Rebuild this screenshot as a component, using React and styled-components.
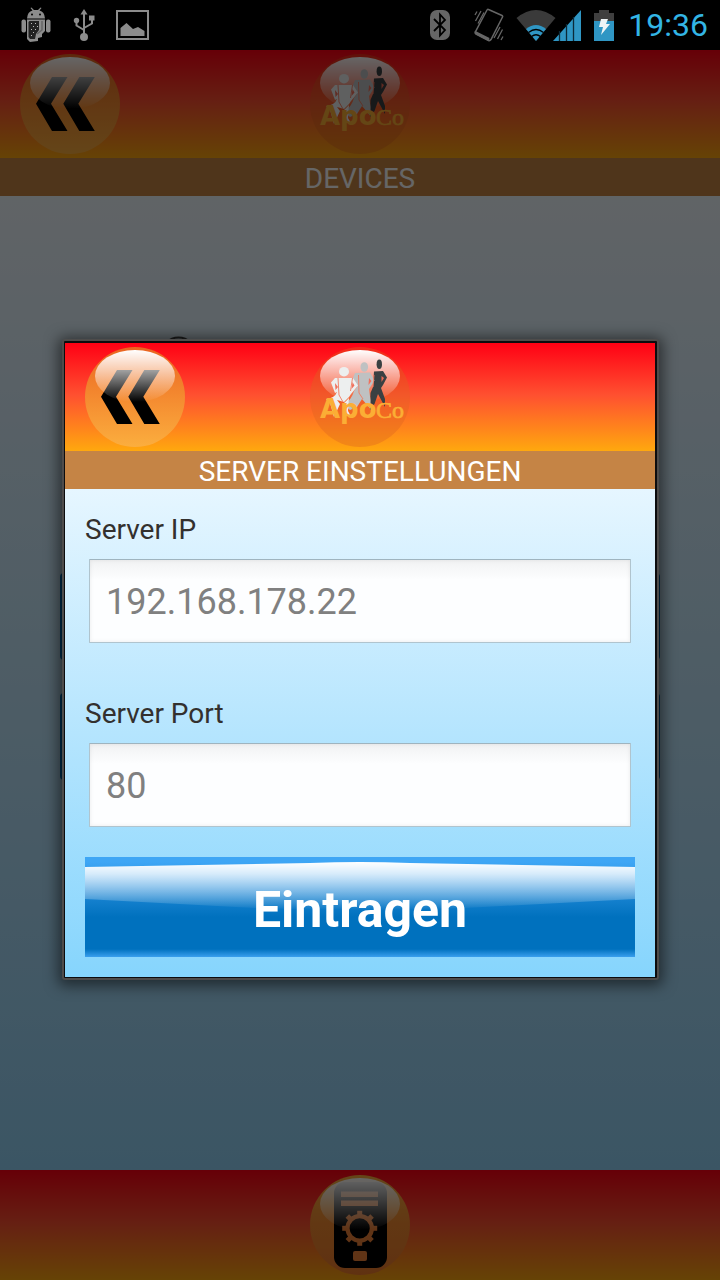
import React from "react";
import styled, { createGlobalStyle } from "styled-components";

const GlobalStyle = createGlobalStyle`
  * { box-sizing: border-box; }
  body { margin: 0; background: #000; font-family: Roboto, "Liberation Sans", sans-serif; }
`;

const Screen = styled.div`
  display: flex;
  flex-direction: column;
  min-height: 100vh;
`;

const StatusBar = styled.div`
  display: flex;
  justify-content: space-between;
  height: 50px;
  padding: 0 12px 0 20px;
  background: #000;
`;

const StatusGroup = styled.div`
  display: flex;
  align-items: center;
  gap: ${(p) => p.$gap}px;
`;

const StatusIcon = styled.svg`
  display: block;
  flex: none;
`;

const Clock = styled.time`
  margin-left: 2px;
  color: #33b5e5;
  font-size: 32px;
  line-height: 50px;
`;

const Stage = styled.div`
  position: relative;
  display: flex;
  flex: 1;
  flex-direction: column;
`;

const Page = styled.div`
  display: flex;
  flex: 1;
  flex-direction: column;
`;

const barGradient = "linear-gradient(#ff0014, #ff5030 48%, #ffa80e)";

const Header = styled.header`
  display: grid;
  grid-template-columns: 100px 1fr 100px;
  justify-items: center;
  height: 108px;
  padding: 4px 20px;
  background: ${barGradient};
`;

const Title = styled.h1`
  height: 38px;
  margin: 0;
  padding-top: 2px;
  background: #c58445;
  color: #fff;
  font-size: 28px;
  font-weight: 400;
  line-height: 38px;
  text-align: center;
`;

const PageBody = styled.main`
  display: flex;
  flex: 1;
  flex-direction: column;
  padding: 140px 60px;
  background: linear-gradient(#f1f9ff, #c6e9fd 45%, #94d5fb);
`;

const Emblem = styled.svg`
  display: block;
  margin: 0 0 200px 100px;
`;

const Panel = styled.div`
  height: 87px;
  margin-bottom: 33px;
  border-radius: 4px;
  background: #0071be;
`;

const Footer = styled.footer`
  display: flex;
  justify-content: center;
  height: 110px;
  padding: 5px 20px;
  background: ${barGradient};
`;

const RoundButton = styled.button`
  width: 100px;
  height: 100px;
  padding: 0;
  border: 0;
  border-radius: 50%;
  background: none;
  cursor: pointer;

  svg { display: block; }
`;

const Scrim = styled.div`
  position: absolute;
  inset: 0;
  display: flex;
  align-items: center;
  padding: 0 61px 11px 62px;
  background: rgba(0, 0, 0, 0.6);
`;

const Dialog = styled.section`
  flex: 1;
  padding: 2px 2px 1px 1px;
  border: 2px solid #4e4c4b;
  border-radius: 3px;
  background: #0c0c0e;
  box-shadow: 0 2px 14px 4px rgba(0, 0, 0, 0.5);
`;

const Form = styled.form`
  display: flex;
  flex-direction: column;
  padding: 20px;
  background: linear-gradient(#e6f6ff, #b5e5fe 50%, #86d5fd);
`;

const Label = styled.label`
  margin-bottom: 8px;
  color: #33302e;
  font-size: 28px;
  line-height: 42px;
`;

const Field = styled.input`
  height: 84px;
  margin: 0 4px ${(p) => p.$after}px;
  padding: 2px 16px 0;
  border: 1px solid #b0c4ce;
  border-top-color: #9fb4bf;
  border-radius: 1px;
  background: linear-gradient(#f1f2f3, #fdfeff 20px);
  box-shadow: inset 0 0 4px rgba(0, 0, 0, 0.08);
  color: #808080;
  font: 400 36px Roboto, "Liberation Sans", sans-serif;
  outline: none;
`;

const SubmitButton = styled.button`
  position: relative;
  height: 100px;
  padding: 0;
  border: 0;
  background: linear-gradient(#3ea6f5, #3ea6f5 5px, #1c86d4 36px, #0071be 60px, #0071be 92px, #3a9fee 100px);
  color: #fff;
  font: 700 50px Roboto, "Liberation Sans", sans-serif;
  cursor: pointer;
`;

const ButtonGloss = styled.svg`
  position: absolute;
  inset: 0;
  width: 100%;
  height: 100%;
`;

const ButtonText = styled.span`
  position: relative;
  display: block;
  padding-top: 6px;
  line-height: 60px;
`;

function Gloss({ id }) {
  return (
    <>
      <defs>
        <linearGradient id={id} x1="0" y1="0" x2="0" y2="1">
          <stop offset="0" stopColor="#fff" />
          <stop offset="0.4" stopColor="#fff" stopOpacity="0.62" />
          <stop offset="1" stopColor="#fff" stopOpacity="0" />
        </linearGradient>
      </defs>
      <ellipse cx="50" cy="29" rx="40" ry="26" fill={`url(#${id})`} />
    </>
  );
}

function Disc({ id, from = "#ea6420", to = "#fbae3e" }) {
  return (
    <>
      <defs>
        <linearGradient id={id} x1="0" y1="0" x2="0" y2="1">
          <stop offset="0" stopColor={from} />
          <stop offset="0.5" stopColor="#f48a30" />
          <stop offset="1" stopColor={to} />
        </linearGradient>
      </defs>
      <circle cx="50" cy="50" r="50" fill={`url(#${id})`} />
    </>
  );
}

function BackIcon({ id }) {
  return (
    <svg width="100" height="100" viewBox="0 0 100 100" aria-hidden="true">
      <Disc id={`${id}-disc`} />
      <path d="M32 23H47.500L31 49.700L47.500 77H32L16 49.700ZM59.300 23H74.800L58.300 49.700L74.800 77H59.300L43.300 49.700Z" />
      <Gloss id={`${id}-gloss`} />
    </svg>
  );
}

function Logo({ id }) {
  return (
    <svg width="100" height="100" viewBox="0 0 100 100" role="img" aria-label="ApoCo">
      <circle cx="50" cy="50" r="50" fill="#dc6420" fillOpacity="0.38" />
      <Gloss id={`${id}-gloss`} />
      <g fill="#3a4042">
        <ellipse cx="69.300" cy="17.300" rx="2.700" ry="4.700" />
        <path d="M64 24.500L73 24L77 30.500L73 38L71 41L75 52V60L68 47L64.500 57L60 63L60.500 46L63 40Z" />
      </g>
      <path d="M71.500 29L74 31L71.500 35Z" fill="#ee6a55" />
      <g fill="#bfc1c2">
        <ellipse cx="54.300" cy="20" rx="3.800" ry="4.800" />
        <path d="M45 26L60 25.500L64.500 33.500L59 42L60.500 53V62L52 52L47 60L40 63L34 58Q42 52 44 44L47 40L44 34L42 38L41 36Z" />
      </g>
      <path d="M59 31L61.500 34L58.500 38Z" fill="#f0705c" />
      <g fill="#edefef">
        <ellipse cx="34" cy="24.700" rx="5" ry="4.800" />
        <path d="M25 31H43L48 38.500L41 47L39 50L34 55L27 53L30 57L24 70L20 56L16 52Q25 51 27 45L25 46L21 35.500Z" />
        <path d="M33 57L39 51L38 64L42 71L34 67Z" />
      </g>
      <path d="M25 36L28 40L25.500 43ZM42.500 35L44.500 38.500L41.500 42Z" fill="#f0705c" />
      <path d="M28 31L29 48L33 55M42.500 31L40.500 44M48.500 28L49 46L53 52M64 28L63 40" stroke="#f07a60" strokeWidth="0.900" fill="none" />
      <text x="10" y="71" fill="#fbae35" fontFamily="DejaVu Sans, sans-serif" fontWeight="700" fontSize="26">
        Apo
        <tspan x="66" fontFamily="Liberation Serif, serif" fontWeight="400" fontSize="24" stroke="#fbae35" strokeWidth="0.700">
          Co
        </tspan>
      </text>
    </svg>
  );
}

function DeviceIcon() {
  return (
    <svg width="100" height="100" viewBox="0 0 100 100" aria-hidden="true">
      <Disc id="device-disc" from="#fbae3e" to="#f07c2c" />
      <rect x="24" y="7" width="53" height="86" rx="11" />
      <g fill="#f08238">
        <rect x="31" y="16.500" width="37" height="5.500" />
        <rect x="31" y="25.500" width="37" height="5.500" />
        <rect x="43" y="76" width="14" height="10" rx="2" />
        {[0, 45, 90, 135, 180, 225, 270, 315].map((a) => (
          <rect key={a} x="47.200" y="35.800" width="5" height="6" transform={`rotate(${a} 49.700 53.300)`} />
        ))}
      </g>
      <circle cx="49.700" cy="53.300" r="12.200" fill="none" stroke="#f08238" strokeWidth="4.200" />
      <Gloss id="device-gloss" />
    </svg>
  );
}

function AppHeader({ id, title }) {
  return (
    <>
      <Header>
        <RoundButton type="button" aria-label="Zurück">
          <BackIcon id={`${id}-back`} />
        </RoundButton>
        <Logo id={`${id}-logo`} />
      </Header>
      <Title>{title}</Title>
    </>
  );
}

function DebugIcon() {
  return (
    <StatusIcon width="32" height="36" viewBox="0 0 32 36" aria-hidden="true">
      <g fill="#8c8c8c">
        <path d="M7 11.500Q7.500 4.500 12.500 3.500L10.500 1L11.500 0.500L14 3H18L20.500 0.500L21.500 1L19.500 3.500Q24.500 4.500 25 11.500Z" />
        <rect x="1.500" y="12.500" width="4.500" height="13" rx="2" />
        <rect x="26" y="12.500" width="4.500" height="13" rx="2" />
        <path d="M7 12.500H25V24L22 27V30L18 31V34L10 35L7 32Z" />
      </g>
      <path d="M9.500 14H19V23L16 27L15 32H10L8.500 30V15Z" fill="#222" />
      <path d="M22 14V23L17 27" fill="none" stroke="#666" strokeWidth="1.500" />
      <path d="M11 16h1v1h-1zM15 16h1v1h-1zM13 19h1v1h-1zM17 19h1v1h-1zM11 22h1v1h-1zM15 22h1v1h-1zM13 25h1v1h-1zM11 28h1v1h-1z" fill="#bbb" />
      <circle cx="12" cy="7.500" r="1" />
      <circle cx="20" cy="7.500" r="1" />
    </StatusIcon>
  );
}

function UsbIcon() {
  return (
    <StatusIcon width="22" height="34" viewBox="0 0 22 34" aria-hidden="true">
      <g fill="#8c8c8c">
        <circle cx="11" cy="29" r="4" />
        <path d="M11 1L14.500 6.500H7.500Z" />
        <circle cx="3.500" cy="12.500" r="2.700" />
        <rect x="16" y="7.500" width="5.500" height="5" />
      </g>
      <path d="M11 5V29M3.500 13V17.500L11 22M19 12V15.500L11 20" fill="none" stroke="#8c8c8c" strokeWidth="2" />
    </StatusIcon>
  );
}

function PictureIcon() {
  return (
    <StatusIcon width="33" height="30" viewBox="0 0 33 30" aria-hidden="true">
      <rect x="1" y="1" width="31" height="28" fill="none" stroke="#8c8c8c" strokeWidth="2" />
      <path d="M4.500 26V18L10.500 13L17 19L22 17L28.500 21V26Z" fill="#8c8c8c" />
    </StatusIcon>
  );
}

function BluetoothIcon() {
  return (
    <StatusIcon width="20" height="30" viewBox="0 0 20 30" aria-hidden="true">
      <rect width="20" height="30" rx="7" fill="#666" />
      <path d="M4 9L15 20L10 25.500V4.500L15 10L4 21" fill="none" stroke="#000" strokeWidth="1.800" />
    </StatusIcon>
  );
}

function VibrateIcon() {
  return (
    <StatusIcon width="30" height="34" viewBox="0 0 30 34" aria-hidden="true">
      <path d="M14.500 1.500L28 7.500Q29 8 28.500 9L17 31.500Q16 33 14.500 32.500L2 26Q0.500 25 1.500 23.500L13 2Q13.500 1 14.500 1.500Z" fill="none" stroke="#666" strokeWidth="1.500" />
      <path d="M1.500 23L15.500 30L14.500 33L1 26Z" fill="#666" />
      <path d="M1 7L3 3.500M1.500 13L7 3M4 15.500L10 4.500M20 30L26 19M23.500 31L28.500 21.500M27 32L29 28.500" fill="none" stroke="#666" strokeWidth="1.300" />
    </StatusIcon>
  );
}

function SignalIcon() {
  return (
    <StatusIcon width="66" height="33" viewBox="0 0 66 33" aria-hidden="true">
      <path d="M0.500 9Q20 -7 39.500 9L20 32Z" fill="#3a3a3a" />
      <path d="M10 20Q20 12 30 20L20 32Z" fill="#2f96c4" />
      <path d="M12.500 23.500Q20 17.500 27.500 23.500M15.500 27.500Q20 24 24.500 27.500" fill="none" stroke="#000" strokeWidth="1.300" />
      <path d="M37 32L65 1V32Z" fill="#2f96c4" />
      <path d="M43.500 22V32M50.500 15V32M57.500 8V32" stroke="#0c2a38" strokeWidth="1.300" />
    </StatusIcon>
  );
}

function BatteryIcon() {
  return (
    <StatusIcon width="20" height="31" viewBox="0 0 20 31" aria-hidden="true">
      <path d="M0 3H5V0H15V3H20V31H0Z" fill="#3f3f3f" />
      <rect y="11" width="20" height="20" fill="#2f96c4" />
      <path d="M7 9H14L12 14H16L7 25L9 17H5Z" fill="#eef4f6" />
    </StatusIcon>
  );
}

export default function App() {
  return (
    <Screen>
      <GlobalStyle />
      <StatusBar>
        <StatusGroup $gap={21}>
          <DebugIcon />
          <UsbIcon />
          <PictureIcon />
        </StatusGroup>
        <StatusGroup $gap={12}>
          <BluetoothIcon />
          <span />
          <VibrateIcon />
          <SignalIcon />
          <BatteryIcon />
          <Clock>19:36</Clock>
        </StatusGroup>
      </StatusBar>

      <Stage>
        <Page inert>
          <AppHeader id="page" title="DEVICES" />
          <PageBody>
            <Emblem width="37" height="37" viewBox="0 0 37 37" aria-hidden="true">
              <circle cx="18.500" cy="18.500" r="17" fill="none" stroke="#444" strokeWidth="2" />
            </Emblem>
            <Panel />
            <Panel />
          </PageBody>
          <Footer>
            <RoundButton type="button" aria-label="Server">
              <DeviceIcon />
            </RoundButton>
          </Footer>
        </Page>

        <Scrim>
          <Dialog role="dialog" aria-label="Server Einstellungen">
            <AppHeader id="dialog" title="SERVER EINSTELLUNGEN" />
            <Form onSubmit={(e) => e.preventDefault()}>
              <Label htmlFor="server-ip">Server IP</Label>
              <Field id="server-ip" type="text" defaultValue="192.168.178.22" $after={50} />
              <Label htmlFor="server-port">Server Port</Label>
              <Field id="server-port" type="text" defaultValue="80" $after={30} />
              <SubmitButton type="submit">
                <ButtonGloss viewBox="0 0 550 100" preserveAspectRatio="none" aria-hidden="true">
                  <defs>
                    <linearGradient id="submit-gloss" x1="0" y1="0" x2="0" y2="1">
                      <stop offset="0" stopColor="#fff" />
                      <stop offset="0.250" stopColor="#fff" stopOpacity="0.800" />
                      <stop offset="1" stopColor="#fff" stopOpacity="0" />
                    </linearGradient>
                  </defs>
                  <path d="M0 10L225 6Q275 4 325 6L550 10V42L380 51Q275 55 170 51L0 42Z" fill="url(#submit-gloss)" />
                </ButtonGloss>
                <ButtonText>Eintragen</ButtonText>
              </SubmitButton>
            </Form>
          </Dialog>
        </Scrim>
      </Stage>
    </Screen>
  );
}
